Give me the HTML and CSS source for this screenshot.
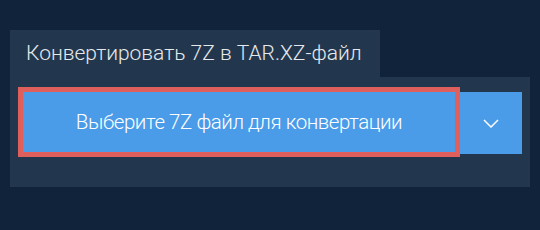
FILE: index.html
```html
<!DOCTYPE html>
<html lang="ru">
<head>
    <meta charset="UTF-8">
    <meta name="viewport" content="width=device-width, initial-scale=1.0">
    <title>Конвертировать 7Z в TAR.XZ</title>
    <link rel="stylesheet" href="styles.css">
</head>
<body>

    <main class="converter">
        <div class="tab">Конвертировать 7Z в TAR.XZ-файл</div>
        <div class="panel">
            <button class="pick-button">Выберите 7Z файл для конвертации</button>
            <button class="menu-button" aria-label="Другие источники">
                <svg width="16" height="9" viewBox="0 0 16 9">
                    <path d="M1 1 L8 8 L15 1" fill="none" stroke="#fff" stroke-width="1.5"/>
                </svg>
            </button>
        </div>
    </main>

</body>
</html>
```

FILE: styles.css
```css
body {
    font-family: 'Roboto', sans-serif;
    font-weight: 300;
    background-color: #10233a;
    margin: 0;
    padding: 30px 10px 0 10px;
}

.converter {
    width: 520px;
}

.tab {
    display: inline-block;
    background-color: #22374d;
    color: #e6e9ec;
    font-size: 21px;
    line-height: 47px;
    height: 47px;
    padding: 0 16px;
    box-sizing: border-box;
    width: 370px;
    white-space: nowrap;
}

.panel {
    background-color: #22374d;
    display: flex;
    align-items: flex-start;
    padding: 15px 8px 35px 13px;
    height: 60px;
}

.pick-button {
    background-color: #4a9be8;
    color: #fff;
    border: none;
    outline: 5px solid #de5f5b;
    font-family: inherit;
    font-weight: 300;
    font-size: 20.5px;
    letter-spacing: -0.45px;
    width: 432px;
    height: 60px;
    padding: 0;
    cursor: pointer;
}

.menu-button {
    background-color: #4a9be8;
    border: none;
    margin-left: 5px;
    width: 62px;
    height: 62px;
    padding: 0;
    display: flex;
    align-items: center;
    justify-content: center;
    cursor: pointer;
}
```
